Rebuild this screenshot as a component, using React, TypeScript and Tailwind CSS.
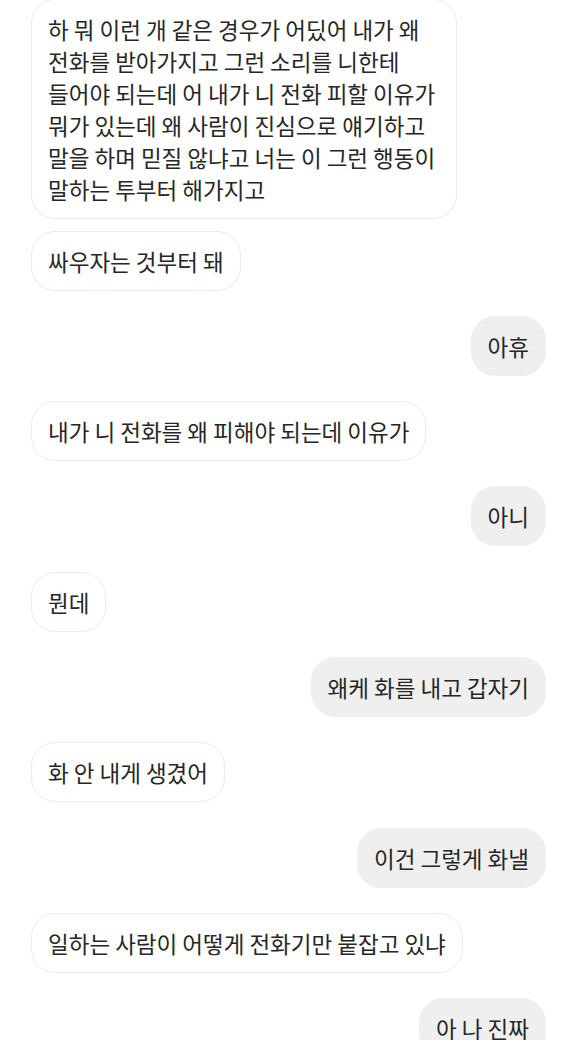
const messages: { from: "them" | "me"; text: string; maxW?: string }[] = [
  {
    from: "them",
    text: "하 뭐 이런 개 같은 경우가 어딨어 내가 왜 전화를 받아가지고 그런 소리를 니한테 들어야 되는데 어 내가 니 전화 피할 이유가 뭐가 있는데 왜 사람이 진심으로 얘기하고 말을 하며 믿질 않냐고 너는 이 그런 행동이 말하는 투부터 해가지고",
    maxW: "max-w-[426px]",
  },
  { from: "them", text: "싸우자는 것부터 돼" },
  { from: "me", text: "아휴" },
  { from: "them", text: "내가 니 전화를 왜 피해야 되는데 이유가" },
  { from: "me", text: "아니" },
  { from: "them", text: "뭔데" },
  { from: "me", text: "왜케 화를 내고 갑자기" },
  { from: "them", text: "화 안 내게 생겼어" },
  { from: "me", text: "이건 그렇게 화낼" },
  { from: "them", text: "일하는 사람이 어떻게 전화기만 붙잡고 있냐" },
  { from: "me", text: "아 나 진짜" },
];

export default function App() {
  return (
    <div
      className="w-[576px] h-[1040px] overflow-hidden bg-white px-[30px] flex flex-col"
      style={{ fontFamily: "'Noto Sans CJK KR', 'Noto Sans', sans-serif" }}
    >
      {messages.map((m, i) => {
        const prev = messages[i - 1];
        // same sender in a row sits closer together
        const gap = i === 0 ? "-mt-px" : prev.from === m.from ? "mt-[11.5px]" : "mt-[25.3px]";
        const mine = m.from === "me";
        return (
          <div key={i} className={`flex shrink-0 ${mine ? "justify-end" : "justify-start"} ${gap}`}>
            <div
              className={`${m.maxW ?? "max-w-[440px]"} break-keep rounded-[24px] border px-4 py-[13px] text-[22.5px] leading-[32px] text-[#262626] ${
                mine ? "bg-[#efefef] border-[#efefef]" : "ml-px bg-white border-[#ececec]"
              }`}
            >
              {m.text}
            </div>
          </div>
        );
      })}
    </div>
  );
}
